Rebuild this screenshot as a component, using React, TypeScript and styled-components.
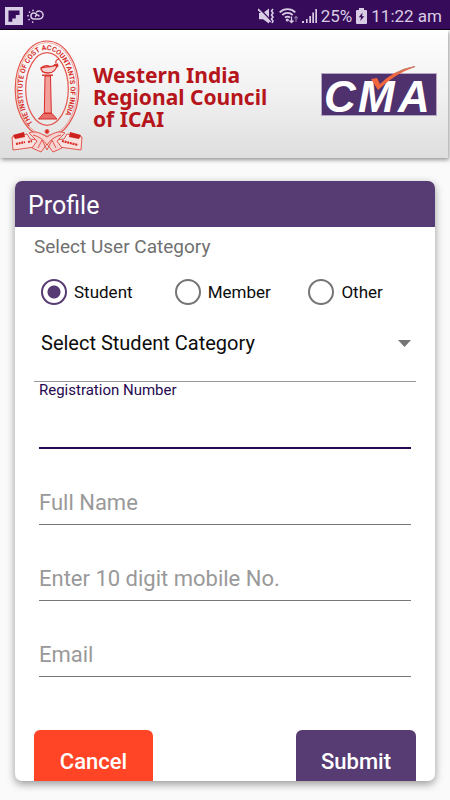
import React, { useState } from "react";
import styled, { createGlobalStyle } from "styled-components";

const violet = "#573b73";
const ink = "#26094f";

const GlobalStyle = createGlobalStyle`
  * { box-sizing: border-box; }
  body { margin: 0; background: #fafafa; font-family: Roboto, sans-serif; color: #0c0c0c; }
  input, select, button { font: inherit; color: inherit; }
`;

const Screen = styled.div`
  display: flex;
  flex-direction: column;
  height: 100vh;
  overflow: hidden;
`;

const StatusBar = styled.div`
  display: flex;
  align-items: center;
  flex: none;
  height: 30px;
  padding: 2px 8px 0 5px;
  background: #360b59;
  border-bottom: 1px solid #0d0216;
  color: #d9cce5;
  font-size: 17px;
  line-height: 24px;
`;

const StatusGroup = styled.div<{ $end?: boolean }>`
  display: flex;
  align-items: center;
  gap: 4px;
  margin-left: ${(p) => (p.$end ? "auto" : "0")};
  svg { display: block; flex: none; }
`;

const Banner = styled.header`
  display: flex;
  align-items: flex-start;
  flex: none;
  height: 128px;
  margin-right: 2px;
  padding: 9px 10px 0 11px;
  background: linear-gradient(#fefefe, #f1f1f1 50%, #dedede);
  box-shadow: 1px 2px 4px rgba(0, 0, 0, 0.4);
`;

const Organisation = styled.h1`
  flex: 1;
  margin: 25px 0 0 9px;
  color: #b5151b;
  font-family: "Noto Sans", sans-serif;
  font-size: 21px;
  font-weight: 700;
  line-height: 22px;
  white-space: nowrap;
`;

const EmblemArt = styled.svg`
  flex: none;
  overflow: visible;
`;

const CmaLogo = styled.svg`
  flex: none;
  margin-top: 25px;
  overflow: visible;
`;

const Card = styled.main`
  display: flex;
  flex-direction: column;
  flex: 1;
  min-height: 0;
  margin: 23px 15px 19px;
  overflow: hidden;
  border-radius: 7px;
  background: #fff;
  box-shadow: 0 3px 9px rgba(0, 0, 0, 0.4);
`;

const CardTitle = styled.h2`
  flex: none;
  margin: 0;
  padding: 4px 13px 0;
  background: ${violet};
  color: #fff;
  font-size: 25px;
  font-weight: 400;
  line-height: 42px;
`;

const Form = styled.form`
  display: flex;
  flex-direction: column;
  flex: none;
  padding: 0 19px;
`;

const Choices = styled.fieldset`
  margin: 0;
  padding: 0;
  border: 0;
`;

const Legend = styled.legend`
  padding: 0;
  color: #707070;
  font-size: 19px;
  line-height: 40px;
`;

const ChoiceRow = styled.div`
  display: grid;
  grid-template-columns: repeat(3, 35%);
  height: 50px;
`;

const Choice = styled.label`
  display: flex;
  align-items: center;
  gap: 7px;
  padding-left: 7px;
  font-size: 17px;
`;

const Radio = styled.input`
  appearance: none;
  flex: none;
  width: 26px;
  height: 26px;
  margin: 0;
  border: 2px solid #757575;
  border-radius: 50%;
  &:checked {
    border-color: ${violet};
    background: radial-gradient(circle, ${violet} 6px, transparent 7px);
  }
`;

const SelectRow = styled.div`
  display: flex;
  align-items: center;
  height: 65px;
  padding: 0 5px 12px 7px;
  border-bottom: 1px solid #9a9a9a;
`;

const Select = styled.select`
  appearance: none;
  flex: 1;
  min-width: 0;
  padding: 0;
  border: 0;
  outline: 0;
  background: transparent;
  font-size: 20px;
`;

const Field = styled.div`
  display: flex;
  flex-direction: column;
  margin: 0 5px;
  padding-top: 31px;
`;

const ActiveField = styled(Field)`
  padding-top: 0;
`;

const FieldLabel = styled.label`
  color: ${ink};
  font-size: 15px;
  line-height: 16px;
`;

const TextInput = styled.input<{ $active?: boolean }>`
  width: 100%;
  height: ${(p) => (p.$active ? "51px" : "45px")};
  padding: 0;
  border: 0;
  border-bottom: ${(p) => (p.$active ? `2px solid ${ink}` : "1px solid #777")};
  border-radius: 0;
  outline: 0;
  background: transparent;
  font-size: 22px;
  &::placeholder { color: #999; opacity: 1; }
`;

const Actions = styled.div`
  display: flex;
  justify-content: space-between;
  margin-top: 53px;
`;

const Button = styled.button<{ $tone: string }>`
  height: 62px;
  min-width: 119px;
  padding: 0 25px;
  border: 0;
  border-radius: 6px;
  background: ${(p) => p.$tone};
  color: #fff;
  font-size: 22px;
  font-weight: 500;
`;

const FlipboardIcon = () => (
  <svg width="18" height="18" viewBox="0 0 18 18" aria-hidden="true">
    <path fill="#d9cce5" d="M0 0h18v18H0z" />
    <path fill="#360b59" d="M3.5 3.5h11V8h-3.700v3.500H7.300v3.200H3.500z" />
  </svg>
);

const WeatherIcon = () => (
  <svg width="18" height="16" viewBox="0 0 18 16" fill="none" stroke="#d9cce5" strokeLinecap="round" aria-hidden="true">
    <path strokeWidth="1.5" d="M7 11h5.500a4 4 0 1 0-3-7M7 11a3 3 0 1 1 2.800-4M8.500 8.500c0-1.700 3-2.300 3.500-.5" />
    <path strokeWidth="1.7" d="M6 2.300v.1M2.500 4v.1M1 7.700h.1M2 11.500h.1M5.700 14v.1" />
  </svg>
);

const MuteVibrateIcon = () => (
  <svg width="17" height="18" viewBox="0 0 17 18" aria-hidden="true">
    <path fill="#d9cce5" d="M1 6h4l6-4.500v15L5 12.300H1z" />
    <path stroke="#360b59" strokeWidth="1.4" d="M1.500 1.500 13.500 14" />
    <path stroke="#d9cce5" strokeWidth="1.7" d="M0 2 12.500 15" />
    <path fill="none" stroke="#d9cce5" strokeWidth="1.600" d="m15 2-1.500 2L15 6l-1.500 2 1.500 2-1.500 2 1.500 2-1 2" />
  </svg>
);

const WifiIcon = () => (
  <svg width="19" height="17" viewBox="0 0 19 17" fill="none" stroke="#d9cce5" strokeWidth="1.8" aria-hidden="true">
    <path d="M.7 5.300C5 1 12 1 16.300 5.300M3.300 8c3-2.900 7.500-2.900 10.400 0M6 10.700c1.600-1.500 3.600-1.500 5 0" />
    <circle cx="8.300" cy="13" r=".7" />
    <path strokeWidth="1.300" d="M12.500 9.500v6m-2-2 2 2 2-2" />
    <path stroke="#87689e" strokeWidth="1.300" d="M17 15V9.500m-1.700 1.700L17 9.500l1.700 1.700" />
  </svg>
);

const SignalIcon = () => (
  <svg width="15" height="16" viewBox="0 0 15 16" fill="#d9cce5" aria-hidden="true">
    <path d="M0 13h2v2H0zM4 11h1.600v4H4zM7.300 8H9v7H7.300zM10.300 4.500H12V15h-1.700z" />
    <path d="M13.300 1H15v14h-1.700z" />
  </svg>
);

const BatteryIcon = () => (
  <svg width="11" height="16" viewBox="0 0 11 16" aria-hidden="true">
    <path fill="#d9cce5" d="M3 0h5v2h2q1 0 1 1v12q0 1-1 1H1q-1 0-1-1V3q0-1 1-1h2z" />
    <path fill="#360b59" d="M6.500 4.500 2.800 9.300h2.300L4.300 13 8.300 8.200H6z" />
  </svg>
);

const Emblem = () => (
  <EmblemArt width="73" height="115" viewBox="0 0 73 115" fill="none" stroke="#e4574f" role="img" aria-label="The Institute of Cost Accountants of India">
    <ellipse cx="36" cy="50" rx="31.800" ry="48" strokeWidth="1.200" />
    <ellipse cx="36" cy="50" rx="30.200" ry="46.400" strokeWidth=".5" />
    <ellipse cx="36" cy="50" rx="21.300" ry="36.300" strokeWidth="1.200" />
    <path id="ring" stroke="none" d="M22 84A24 40 0 1 1 49 84" />
    <text fill="#d92c28" stroke="none" fontFamily="Roboto, sans-serif" fontWeight="700" fontSize="7">
      <textPath href="#ring">THE INSTITUTE OF COST ACCOUNTANTS OF INDIA</textPath>
    </text>
    <g stroke="#d92c28">
      <path fill="#f2a09a" d="M34 37h5.500l.8 37h-7z" />
      <path strokeWidth="1.400" d="M31 36.200h11" />
      <path fill="#e8706a" d="M32.500 74.500h8.500l5 5.500H27.500z" />
      <path fill="#f6d4d1" strokeWidth="1.300" d="M30 29c4-2 10 0 16-3.500-.5 5-4 8.500-9 8.500s-7-1.500-7-5z" />
      <path strokeWidth="1.200" d="M30 29q4-4 9-1.500M43 27c1-4 6-1 3 1M45 24q-1-3 3-4" />
    </g>
    <circle cx="36" cy="92.500" r="2" fill="#d92c28" />
    <path fill="#f7e2df" strokeWidth="1" d="M16 95 1 98l1 13 22-3 3-7-8-1zM56 95l15 3-1 13-22-3-3-7 8-1z" />
    <path fill="#f6d4d1" d="M18 94c7-3 13 1 18 4 5-3 11-7 18-4l-8 8 5 7-9 4-6-8-6 8-9-4 5-7z" />
    <path d="M22 96q9 2 14 10 5-8 14-10M27 109l4-8 5 10 5-10 4 8" />
    <path fill="#cf211e" stroke="none" d="m2 96 11-3 1 5-10 2zM70 96l-11-3-1 5 10 2z" />
    <path stroke="#d92c28" strokeWidth="2.200" strokeDasharray="2 .7" d="M5 105l9-2M17 103l4-1M51 102l16 4" />
  </EmblemArt>
);

const fields = [
  { id: "name", text: "Full Name", type: "text" },
  { id: "mobile", text: "Enter 10 digit mobile No.", type: "tel" },
  { id: "email", text: "Email", type: "email" },
];

export default function App() {
  const [category, setCategory] = useState("Student");
  return (
    <>
      <GlobalStyle />
      <Screen>
        <StatusBar>
          <StatusGroup>
            <FlipboardIcon />
            <WeatherIcon />
          </StatusGroup>
          <StatusGroup $end>
            <MuteVibrateIcon />
            <WifiIcon />
            <SignalIcon />
            <span>25%</span>
            <BatteryIcon />
            <span>11:22 am</span>
          </StatusGroup>
        </StatusBar>
        <Banner>
          <Emblem />
          <Organisation>
            Western India
            <br />
            Regional Council
            <br />
            of ICAI
          </Organisation>
          <CmaLogo width="118" height="56" viewBox="0 0 118 56" role="img" aria-label="CMA">
            <path fill="#4f316e" stroke="#b6a8c4" d="M1.500 9.500h115v42H1.500z" />
            <g fill="#fff" fontFamily="Liberation Sans, sans-serif" fontWeight="700" fontStyle="italic" fontSize="44">
              <text x="4" y="48">C</text>
              <text x="38" y="48">M</text>
              <text x="78" y="48">A</text>
            </g>
            <path fill="#f1663c" d="m51 15 6-1 3 6Q74 6 95 2v1Q76 9 58 26z" />
            <path fill="none" stroke="#b98579" d="M76 9Q85 4 95 2.500" />
          </CmaLogo>
        </Banner>
        <Card>
          <CardTitle>Profile</CardTitle>
          <Form onSubmit={(e) => e.preventDefault()}>
            <Choices>
              <Legend>Select User Category</Legend>
              <ChoiceRow>
                {["Student", "Member", "Other"].map((name) => (
                  <Choice key={name}>
                    <Radio
                      type="radio"
                      name="category"
                      checked={category === name}
                      onChange={() => setCategory(name)}
                    />
                    {name}
                  </Choice>
                ))}
              </ChoiceRow>
            </Choices>
            <SelectRow>
              <Select aria-label="Student category">
                <option>Select Student Category</option>
              </Select>
              <svg width="13" height="7" viewBox="0 0 13 7" aria-hidden="true">
                <path fill="#757575" d="M0 0h13L6.500 7z" />
              </svg>
            </SelectRow>
            <ActiveField>
              <FieldLabel htmlFor="registration">Registration Number</FieldLabel>
              <TextInput id="registration" $active />
            </ActiveField>
            {fields.map((f) => (
              <Field key={f.id}>
                <TextInput id={f.id} type={f.type} placeholder={f.text} aria-label={f.text} />
              </Field>
            ))}
            <Actions>
              <Button type="button" $tone="#ff4526">Cancel</Button>
              <Button type="submit" $tone={violet}>Submit</Button>
            </Actions>
          </Form>
        </Card>
      </Screen>
    </>
  );
}
